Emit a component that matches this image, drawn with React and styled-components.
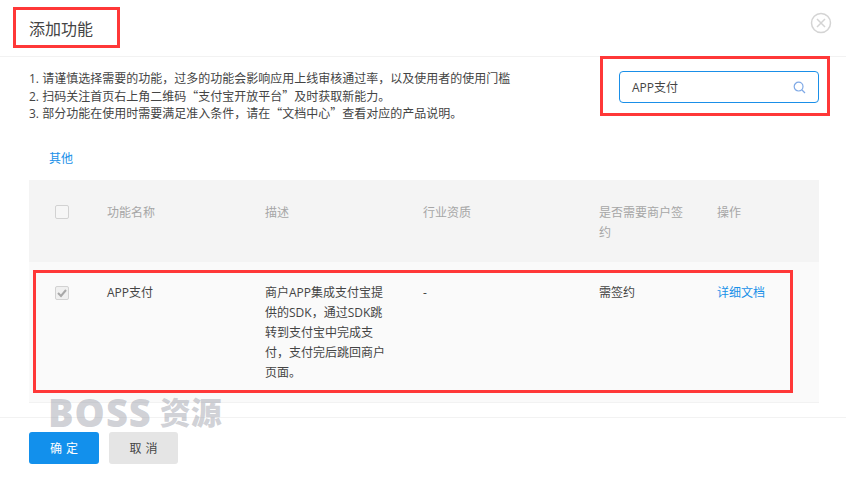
import React from "react";
import styled, { createGlobalStyle } from "styled-components";

const GlobalStyle = createGlobalStyle`
  html, body {
    margin: 0;
    padding: 0;
    background: #fff;
  }
  * {
    box-sizing: border-box;
  }
`;

const Page = styled.div`
  position: relative;
  width: 846px;
  height: 478px;
  overflow: hidden;
  color: #333;
  font-family: "Open Sans", "Noto Sans CJK SC", sans-serif;
  font-size: 12px;
`;

const Header = styled.header`
  display: flex;
  align-items: flex-start;
  justify-content: space-between;
  height: 57px;
  padding: 0 14px 0 29px;
  border-bottom: 1px solid #f2f2f2;
`;

const Title = styled.h1`
  margin: 17px 0 0;
  font-size: 16px;
  font-weight: 400;
  line-height: 24px;
  color: #444;
`;

const CloseIcon = styled.svg`
  display: block;
  width: 22px;
  height: 22px;
  margin-top: 12px;
  fill: none;
  stroke: #d4d4d4;
  stroke-width: 1.5;
`;

const Intro = styled.section`
  display: flex;
  justify-content: space-between;
  padding: 14px 27px 0 29px;
`;

const Notes = styled.div`
  line-height: 16.5px;
  color: #444;
`;

const Quote = styled.span`
  font-family: "Noto Sans CJK SC", sans-serif;
`;

const SearchBox = styled.div`
  display: flex;
  align-items: center;
  justify-content: space-between;
  width: 200px;
  height: 32px;
  padding: 0 12px;
  border: 1px solid #1a8fe8;
  border-radius: 4px;
  color: #444;
`;

const SearchIcon = styled.svg`
  width: 13px;
  height: 13px;
  fill: none;
  stroke: #7fa9e6;
  stroke-width: 1.2;
`;

const Category = styled.a`
  display: block;
  margin: 26px 0 0 49px;
  line-height: 20px;
  color: #1890e8;
`;

const Table = styled.div`
  margin: 11px 27px 0 29px;
`;

const Row = styled.div`
  display: grid;
  grid-template-columns: 78px 158px 158px 176px 118px 102px;
  padding: ${(p) => (p.$head ? "23px 0 19px" : "21px 0 19px")};
  line-height: 20px;
  background: ${(p) => (p.$head ? "#f4f4f4" : "#fafafa")};
  color: ${(p) => (p.$head ? "#a6a6a6" : "#444")};
  border-bottom: ${(p) => (p.$head ? "none" : "1px solid #f2f2f2")};
`;

const Cell = styled.div`
  padding-right: ${(p) => (p.$wide ? "36px" : "30px")};
`;

const CheckCell = styled.div`
  padding: ${(p) => (p.$head ? "2px" : "3px")} 0 0 26px;
`;

const Check = styled.span`
  display: flex;
  align-items: center;
  justify-content: center;
  width: 14px;
  height: 14px;
  border: 1px solid #d2d2d2;
  border-radius: 2px;
  background: ${(p) => (p.$checked ? "#f0f0f0" : "#f6f6f6")};
`;

const TickIcon = styled.svg`
  width: 10px;
  height: 10px;
  fill: none;
  stroke: #a8a8a8;
  stroke-width: 2;
`;

const DocLink = styled.a`
  color: #1890e8;
`;

const Footer = styled.footer`
  display: flex;
  gap: 10px;
  margin-top: 14px;
  padding: 14px 29px 0;
  border-top: 1px solid #f2f2f2;
`;

const Button = styled.button`
  width: ${(p) => (p.$primary ? "70px" : "69px")};
  height: 32px;
  padding: 0 0 0 4px;
  border: none;
  border-radius: 3px;
  font: inherit;
  letter-spacing: 4px;
  background: ${(p) => (p.$primary ? "#1290ec" : "#e5e5e5")};
  color: ${(p) => (p.$primary ? "#fff" : "#444")};
`;

const Callout = styled.div`
  position: absolute;
  left: ${(p) => p.$x}px;
  top: ${(p) => p.$y}px;
  width: ${(p) => p.$w}px;
  height: ${(p) => p.$h}px;
  border: 3px solid #ff3838;
`;

const Watermark = styled.div`
  position: absolute;
  left: 48px;
  top: 387px;
  display: flex;
  align-items: center;
  gap: 8px;
  font-size: 38px;
  font-weight: 800;
  line-height: 50px;
  letter-spacing: 1px;
  white-space: nowrap;
  color: rgba(150, 153, 165, 0.45);
`;

const WatermarkCjk = styled.span`
  font-size: 31px;
  letter-spacing: 0;
`;

export default function App() {
  return (
    <Page>
      <GlobalStyle />
      <Header>
        <Title>添加功能</Title>
        <CloseIcon viewBox="0 0 22 22">
          <circle cx="11" cy="11" r="9.5" />
          <path d="M7 7l8 8M15 7l-8 8" />
        </CloseIcon>
      </Header>
      <Intro>
        <Notes>
          <div>1. 请谨慎选择需要的功能，过多的功能会影响应用上线审核通过率，以及使用者的使用门槛</div>
          <div>2. 扫码关注首页右上角二维码<Quote>“</Quote>支付宝开放平台<Quote>”</Quote>及时获取新能力。</div>
          <div>3. 部分功能在使用时需要满足准入条件，请在<Quote>“</Quote>文档中心<Quote>”</Quote>查看对应的产品说明。</div>
        </Notes>
        <SearchBox>
          <span>APP支付</span>
          <SearchIcon viewBox="0 0 13 13">
            <circle cx="5.6" cy="5.6" r="4.4" />
            <path d="M9 9l3 3" />
          </SearchIcon>
        </SearchBox>
      </Intro>
      <Category>其他</Category>
      <Table>
        <Row $head>
          <CheckCell $head>
            <Check />
          </CheckCell>
          <Cell>功能名称</Cell>
          <Cell>描述</Cell>
          <Cell>行业资质</Cell>
          <Cell>是否需要商户签约</Cell>
          <Cell>操作</Cell>
        </Row>
        <Row>
          <CheckCell>
            <Check $checked>
              <TickIcon viewBox="0 0 10 10">
                <path d="M1 5l3 3 5-6" />
              </TickIcon>
            </Check>
          </CheckCell>
          <Cell>APP支付</Cell>
          <Cell $wide>商户APP集成支付宝提供的SDK，通过SDK跳转到支付宝中完成支付，支付完后跳回商户页面。</Cell>
          <Cell>-</Cell>
          <Cell>需签约</Cell>
          <Cell>
            <DocLink>详细文档</DocLink>
          </Cell>
        </Row>
      </Table>
      <Footer>
        <Button $primary>确定</Button>
        <Button>取消</Button>
      </Footer>
      <Watermark>
        BOSS
        <WatermarkCjk>资源</WatermarkCjk>
      </Watermark>
      <Callout $x={13} $y={7} $w={107} $h={41} />
      <Callout $x={600} $y={56} $w={230} $h={60} />
      <Callout $x={33} $y={270} $w={760} $h={123} />
    </Page>
  );
}
